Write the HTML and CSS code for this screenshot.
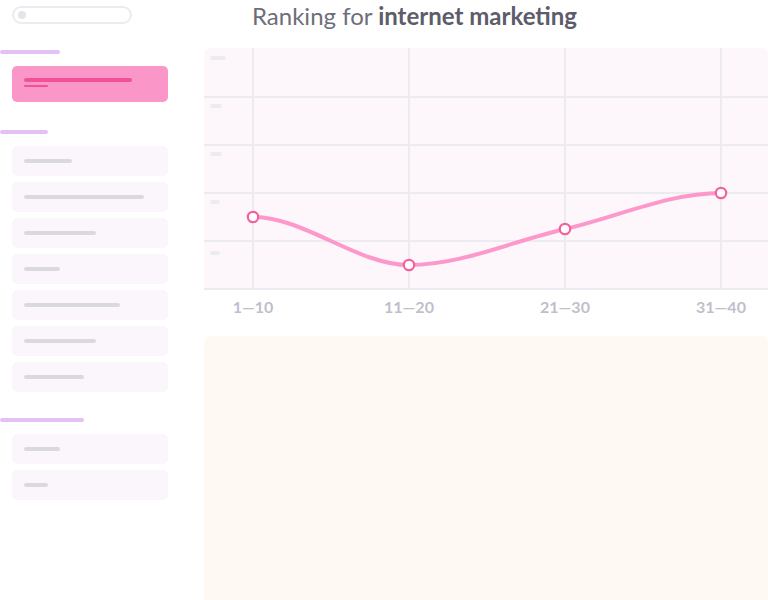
FILE: index.html
```html
<!DOCTYPE html>
<html lang="en">
<head>
<meta charset="utf-8">
<title>Ranking</title>
<link rel="stylesheet" href="styles.css">
</head>
<body>
<div class="app">
  <aside class="sidebar">
    <div class="search"><span class="search-dot"></span></div>

    <section class="group group-first">
      <div class="group-bar bar-60"></div>
      <div class="item item-active">
        <span class="active-line"></span>
        <span class="active-sub"></span>
      </div>
    </section>

    <section class="group group-second">
      <div class="group-bar bar-48"></div>
      <div class="items">
        <div class="item"><span class="line" style="width:48px"></span></div>
        <div class="item"><span class="line" style="width:120px"></span></div>
        <div class="item"><span class="line" style="width:72px"></span></div>
        <div class="item"><span class="line" style="width:36px"></span></div>
        <div class="item"><span class="line" style="width:96px"></span></div>
        <div class="item"><span class="line" style="width:72px"></span></div>
        <div class="item"><span class="line" style="width:60px"></span></div>
      </div>
    </section>

    <section class="group group-third">
      <div class="group-bar bar-84"></div>
      <div class="items">
        <div class="item"><span class="line" style="width:36px"></span></div>
        <div class="item"><span class="line" style="width:24px"></span></div>
      </div>
    </section>
  </aside>

  <main class="main">
    <h1 class="title">Ranking for <strong>internet marketing</strong></h1>

    <div class="chart">
      <svg class="chart-svg" width="564" height="242" viewBox="0 0 564 242" xmlns="http://www.w3.org/2000/svg">
        <g fill="#ebebf0">
          <rect x="0" y="48" width="564" height="2"/>
          <rect x="0" y="96" width="564" height="2"/>
          <rect x="0" y="144" width="564" height="2"/>
          <rect x="0" y="192" width="564" height="2"/>
          <rect x="0" y="240" width="564" height="2"/>
          <rect x="48" y="0" width="2" height="242"/>
          <rect x="204" y="0" width="2" height="242"/>
          <rect x="360" y="0" width="2" height="242"/>
          <rect x="516" y="0" width="2" height="242"/>
        </g>
        <g fill="#ececf0">
          <rect x="6" y="8" width="16" height="4" rx="2"/>
          <rect x="6" y="56" width="12" height="4" rx="2"/>
          <rect x="6" y="104" width="12" height="4" rx="2"/>
          <rect x="6" y="152" width="10" height="4" rx="2"/>
          <rect x="6" y="203" width="10" height="4" rx="2"/>
        </g>
        <path d="M49 169 C101 169 153 217 205 217 C257 217 309 193 361 181 C413 169 465 145 517 145" fill="none" stroke="#fc98ca" stroke-width="4" stroke-linecap="round"/>
        <g fill="#ffffff" stroke="#f4619f" stroke-width="2.2">
          <circle cx="49" cy="169" r="5.2"/>
          <circle cx="205" cy="217" r="5.2"/>
          <circle cx="361" cy="181" r="5.2"/>
          <circle cx="517" cy="145" r="5.2"/>
        </g>
      </svg>
    </div>

    <div class="labels">
      <span class="label">1—10</span>
      <span class="label">11—20</span>
      <span class="label">21—30</span>
      <span class="label">31—40</span>
    </div>

    <div class="panel"></div>
  </main>
</div>
</body>
</html>
```

FILE: styles.css
```css
* { box-sizing: border-box; }

html, body {
  margin: 0;
  padding: 0;
  background: #ffffff;
  height: 600px;
  overflow: hidden;
}

body {
  font-family: Lato, "Open Sans", "Liberation Sans", sans-serif;
}

.app {
  display: grid;
  grid-template-columns: 204px 564px;
  height: 600px;
}

/* Sidebar */
.sidebar {
  display: flex;
  flex-direction: column;
  padding-top: 6px;
}

.search {
  margin-left: 12px;
  width: 120px;
  height: 18px;
  border: 2px solid #ebebf0;
  border-radius: 9px;
  display: flex;
  align-items: center;
  padding-left: 4px;
}

.search-dot {
  width: 8px;
  height: 8px;
  border-radius: 50%;
  background: #e4e4ea;
}

.group {
  display: flex;
  flex-direction: column;
  gap: 12px;
}

.group-first { margin-top: 26px; }
.group-second { margin-top: 28px; }
.group-third { margin-top: 26px; }

.group-bar {
  height: 4px;
  border-radius: 2px;
  background: #e4c1f5;
}

.bar-60 { width: 60px; }
.bar-48 { width: 48px; }
.bar-84 { width: 84px; }

.items {
  display: flex;
  flex-direction: column;
  gap: 6px;
}

.item {
  margin-left: 12px;
  width: 156px;
  height: 30px;
  border-radius: 5px;
  background: #faf6fc;
  display: flex;
  align-items: center;
  padding-left: 12px;
}

.line {
  height: 4px;
  border-radius: 2px;
  background: #d9d9de;
  margin-top: -1px;
}

.item-active {
  height: 36px;
  background: #fb96c8;
  flex-direction: column;
  align-items: flex-start;
  padding-top: 12px;
}

.active-line {
  width: 108px;
  height: 4px;
  border-radius: 2px;
  background: #f2519a;
}

.active-sub {
  margin-top: 3px;
  width: 24px;
  height: 2px;
  border-radius: 1px;
  background: #f2519a;
}

/* Main */
.main {
  display: flex;
  flex-direction: column;
}

.title {
  margin: 0;
  height: 48px;
  padding-left: 48px;
  font-size: 24px;
  line-height: 32px;
  font-weight: 400;
  color: #6e6e7b;
  white-space: nowrap;
}

.title strong {
  font-weight: 700;
  color: #5c5c6a;
}

.chart {
  height: 242px;
  background: #fdf6fb;
  border-radius: 6px 6px 0 0;
  overflow: hidden;
}

.chart-svg {
  display: block;
}

.labels {
  height: 46px;
  display: grid;
  grid-template-columns: repeat(4, 98px);
  column-gap: 58px;
  padding-top: 9px;
}

.label {
  text-align: center;
  font-size: 16px;
  line-height: 16px;
  font-weight: 700;
  color: #bfbfcb;
}

.panel {
  flex: 1;
  background: #fefaf3;
  border-radius: 6px 6px 0 0;
}
```
